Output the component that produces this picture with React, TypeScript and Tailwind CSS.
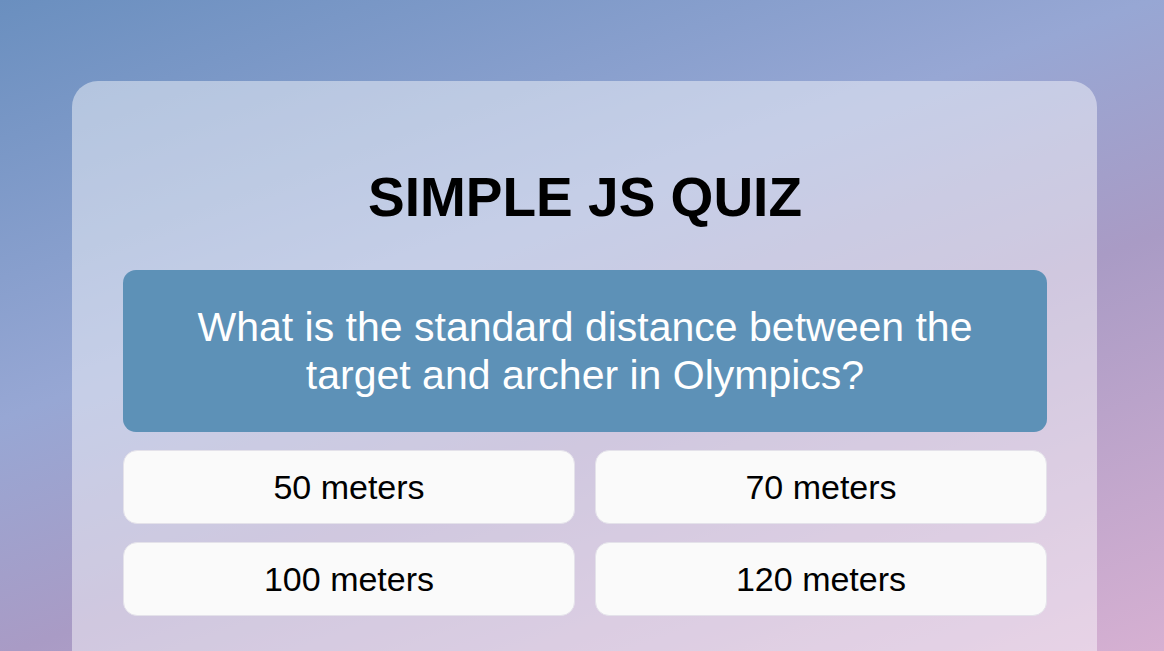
const answers = ["50 meters", "70 meters", "100 meters", "120 meters"];

export default function App() {
  return (
    <div className="h-screen overflow-hidden bg-[linear-gradient(160deg,#6a8fbf_0%,#97a7d4_39%,#a99bc5_61%,#d6b0d2_100%)] pt-[81px] pl-[72px] font-['Liberation_Sans',Arial,sans-serif]">
      <div className="w-[1025px] rounded-[26px] bg-white/45 pl-[51px] pr-[50px] pt-[84px] pb-[120px]">

        {/* Title */}

        <h1 className="text-center text-[55px] font-bold leading-[64px] text-black">
          SIMPLE JS QUIZ
        </h1>

        {/* Question */}

        <div className="mt-[41px] rounded-[13px] bg-[#5d91b7] px-10 py-[33px] text-center text-[41px] leading-[48px] text-white">
          What is the standard distance between the
          <br />
          target and archer in Olympics?
        </div>

        {/* Answers */}

        <div className="mt-[18px] grid grid-cols-2 gap-x-[20px] gap-y-[18px]">
          {answers.map((a) => (
            <button
              key={a}
              className="flex h-[74px] items-center justify-center rounded-[14px] border border-[#e4e2ea] bg-[#fafafa] text-[34px] text-black"
            >
              {a}
            </button>
          ))}
        </div>

      </div>
    </div>
  );
}
